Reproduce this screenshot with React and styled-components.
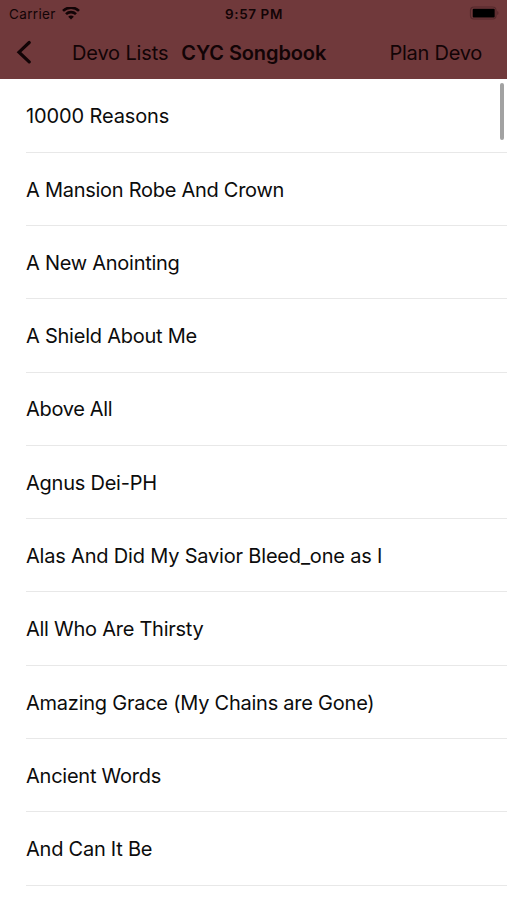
import React from 'react';
import styled, { createGlobalStyle } from 'styled-components';

const GlobalStyle = createGlobalStyle`
  * {
    box-sizing: border-box;
  }

  body {
    margin: 0;
    background-color: #fff;
    font-family: Inter, 'Liberation Sans', sans-serif;
  }
`;

const Screen = styled.div`
  position: relative;
  height: 900px;
  overflow: hidden;
  background-color: #fff;
`;

const Header = styled.header`
  height: 79px;
  background-color: #70393b;
  color: #120406;
`;

const StatusBar = styled.div`
  display: grid;
  grid-template-columns: 1fr auto 1fr;
  align-items: center;
  height: 27px;
  padding: 1px 8px 0 9px;
  font-size: 13.5px;
  line-height: 26px;
`;

const Carrier = styled.div`
  display: flex;
  align-items: center;
  gap: 6px;
  letter-spacing: 0.35px;
`;

const Time = styled.div`
  font-weight: 600;
  letter-spacing: 0.6px;
`;

const Battery = styled.svg`
  justify-self: end;
  margin-top: -2px;
`;

const NavBar = styled.nav`
  display: flex;
  align-items: center;
  height: 52px;
  padding: 0 25px 0 16px;
  font-size: 20px;
`;

const NavButton = styled.button`
  padding: 0;
  border: 0;
  background: none;
  color: inherit;
  font: inherit;
  line-height: 26px;
  letter-spacing: ${({ $spacing }) => $spacing || 0}px;
  white-space: nowrap;
`;

const BackButton = styled(NavButton)`
  display: flex;
  width: 56px;
  padding-bottom: 2px;
`;

const Title = styled.h1`
  flex: 1;
  margin: 0 0 0 13px;
  font-size: 20px;
  font-weight: 600;
  line-height: 26px;
  letter-spacing: -0.1px;
  white-space: nowrap;
`;

const SongList = styled.ul`
  margin: 0;
  padding: 0.4px 0 0 26px;
  list-style: none;
`;

const Song = styled.li`
  display: flex;
  align-items: center;
  height: 73.3px;
  padding-top: 1.4px;
  border-bottom: 1px solid #e8e8e8;
  color: #0c0c0c;
  font-size: 20px;
  letter-spacing: ${({ $spacing }) => $spacing || 0}px;
  white-space: nowrap;
`;

const ScrollThumb = styled.div`
  position: absolute;
  top: 83px;
  right: 3px;
  width: 4px;
  height: 57px;
  border-radius: 2px;
  background-color: #a2a2a2;
`;

const songs = [
  { name: '10000 Reasons', spacing: -0.12 },
  { name: 'A Mansion Robe And Crown', spacing: -0.27 },
  { name: 'A New Anointing', spacing: -0.26 },
  { name: 'A Shield About Me', spacing: -0.24 },
  { name: 'Above All', spacing: -0.32 },
  { name: 'Agnus Dei-PH', spacing: -0.24 },
  { name: 'Alas And Did My Savior Bleed_one as I', spacing: -0.19 },
  { name: 'All Who Are Thirsty', spacing: -0.26 },
  { name: 'Amazing Grace (My Chains are Gone)', spacing: -0.24 },
  { name: 'Ancient Words', spacing: -0.24 },
  { name: 'And Can It Be', spacing: -0.24 },
];

const WifiIcon = () => (
  <svg width="18" height="14" viewBox="0 0 18 14" fill="none" stroke="currentColor" strokeWidth="2.6">
    <path d="M1 3.9a11.4 11.4 0 0 1 16 0" />
    <path d="M4 7.2a7.1 7.1 0 0 1 10 0" />
    <path d="M9 12.5L6.2 9.7a3.9 3.9 0 0 1 5.6 0z" fill="currentColor" stroke="none" />
  </svg>
);

const BatteryIcon = () => (
  <Battery width="30" height="14" viewBox="0 0 30 14">
    <rect x="1.5" y="1" width="25.5" height="12" rx="3.5" fill="none" stroke="#55292c" strokeWidth="1.2" />
    <rect x="3.7" y="2.7" width="22" height="8.8" rx="1" fill="#000" />
    <path d="M28.2 5v4q1.3-.6 1.3-2t-1.3-2z" fill="#55292c" />
  </Battery>
);

const App = () => {
  return (
    <Screen>
      <GlobalStyle />
      <Header>
        <StatusBar>
          <Carrier>
            Carrier
            <WifiIcon />
          </Carrier>
          <Time>9:57 PM</Time>
          <BatteryIcon />
        </StatusBar>
        <NavBar>
          <BackButton aria-label="Back">
            <svg width="16" height="24" viewBox="0 0 16 24" fill="none" stroke="currentColor" strokeWidth="3.2">
              <path d="M13.2 2.5L3 12.2l10.2 9.7" strokeLinecap="round" />
            </svg>
          </BackButton>
          <NavButton $spacing={-0.15}>Devo Lists</NavButton>
          <Title>CYC Songbook</Title>
          <NavButton $spacing={-0.25}>Plan Devo</NavButton>
        </NavBar>
      </Header>
      <SongList>
        {songs.map(({ name, spacing }) => (
          <Song key={name} $spacing={spacing}>
            {name}
          </Song>
        ))}
      </SongList>
      <ScrollThumb />
    </Screen>
  );
};

export default App;
